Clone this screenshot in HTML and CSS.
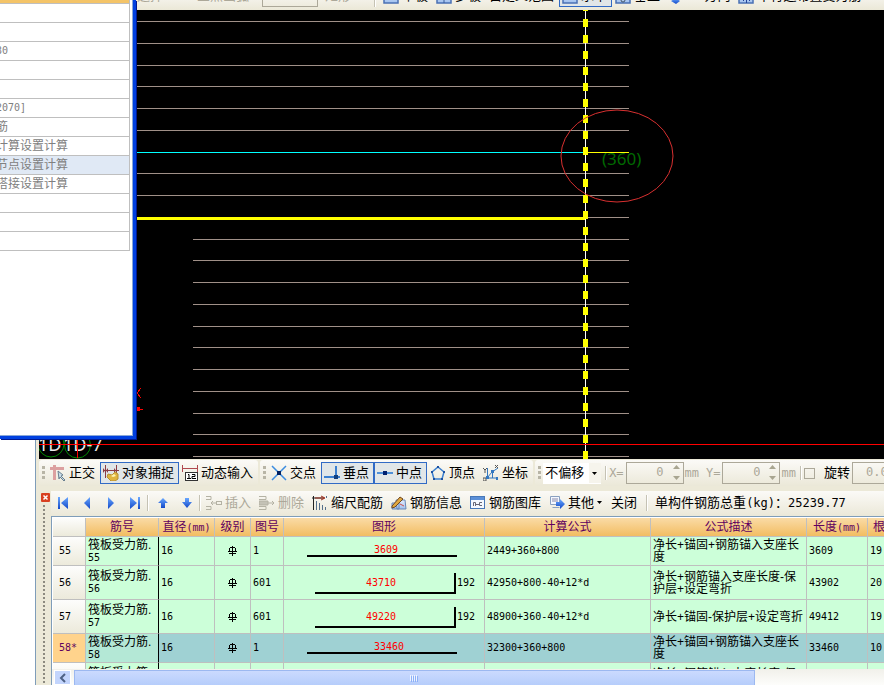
FILE: index.html
```html
<!DOCTYPE html>
<html lang="zh-CN">
<head>
<meta charset="utf-8">
<title>钢筋抽样</title>
<link rel="stylesheet" href="styles.css">
</head>
<body>
<svg width="0" height="0" class="defs" aria-hidden="true">
  <defs>
    <linearGradient id="blue" x1="0" y1="0" x2="0" y2="1"><stop offset="0" stop-color="#6aa8ff"/><stop offset="1" stop-color="#1248c8"/></linearGradient>
    <linearGradient id="pale" x1="0" y1="0" x2="0" y2="1"><stop offset="0" stop-color="#e4eeff"/><stop offset="1" stop-color="#a0c0ee"/></linearGradient>
    <symbol id="grade" viewBox="0 0 9 10"><path d="M2 1h5v1H2zM1 2h1v3H1zM7 2h1v3H7zM4 0h1v10H4zM0 5h9v1H0zM1 7h7v1H1z"/></symbol>
    <symbol id="slab" viewBox="0 0 16 16"><rect x="1" y="1" width="14" height="14" fill="url(#pale)" stroke="#4a70b4" stroke-width="1.500"/></symbol>
  </defs>
</svg>
<main class="window">
  <header class="draw-bar">
    <button class="tool off"><span>选择</span></button>
    <button class="tool off arc"><span>三点画弧</span></button>
    <input class="arc-size" type="text" aria-label="半径" disabled>
    <button class="tool off"><span>矩形</span></button>
    <i class="sep"></i>
    <button class="tool"><svg width="16" height="16"><use href="#slab"/></svg><span>单板</span></button>
    <button class="tool"><svg width="16" height="16"><use href="#slab"/><path d="M8 1v14" stroke="#3a5f9c"/></svg><span>多板</span></button>
    <button class="tool"><span>自定义范围</span></button>
    <button class="tool on"><svg width="16" height="16"><use href="#slab"/></svg><span>水平</span></button>
    <button class="tool"><svg width="16" height="16"><use href="#slab"/><circle cx="8" cy="12" r="2" fill="none" stroke="#456"/></svg><span>垂直</span></button>
    <button class="tool"><svg width="16" height="16"><path d="M3 13l5-3 4 3-4 3z" fill="url(#blue)"/></svg><span>XY方向</span></button>
    <button class="tool"><svg width="16" height="16"><use href="#slab"/><path d="M5.500 9v4M8.500 9v6M11.500 9v4" stroke="#249"/></svg><span>平行边布置受力筋</span></button>
  </header>

  <svg class="canvas" role="img" aria-label="绘图区">
    <g transform="translate(-39 -10)" shape-rendering="crispEdges">
      <path d="M137 21.500H629M137 43.500H629M137 65.500H629M137 86.500H629M137 108.500H629M137 130.500H629M137 173.500H629M137 195.500H629M137 217.500H629M193 239.500H629M193 260.500H629M193 282.500H629M193 304.500H629M193 326.500H629M193 347.500H629M193 369.500H629M193 391.500H629M193 413.500H629M193 434.500H629M193 456.500H629" stroke="#a09088"/>
      <path d="M137 152.500H585" stroke="#0ff"/>
      <path d="M588 152.500H629" stroke="#ff0"/>
      <path d="M137 218.500H586" stroke="#ff0" stroke-width="3"/>
      <path d="M585.500 10V459" stroke="#fff"/>
      <path d="M585.500 3V459" stroke="#ff0" stroke-width="5" stroke-dasharray="8 8"/>
      <g fill="none" stroke="#080" shape-rendering="auto"><circle cx="51" cy="444" r="13"/><circle cx="77.500" cy="445" r="13"/></g>
      <g class="axis" shape-rendering="auto"><text x="38" y="451">1D</text><text x="63" y="451">1D-7</text></g>
      <path d="M39 444.500H2000M77.500 440V458" stroke="#f00"/>
      <path d="M141 388l-4 5 4 5M137 409h6" fill="none" stroke="#f00"/><path d="M137 407h3v4h-3z" fill="#f00"/>
      <ellipse cx="617" cy="156" rx="56" ry="46" fill="none" stroke="#d83030" shape-rendering="auto"/>
      <text class="dim" x="602" y="165">(360)</text>
    </g>
  </svg>

  <div class="snap-bar">
    <div class="group">
      <i class="grip"></i>
      <button class="tool"><svg width="16" height="16"><path d="M0 2h14v3H0zM3 0h3v15H3z" fill="#dca0a0"/><path d="M8 6l5 4-2 1 4 4-1 1-4-4-1 2z" fill="#c8dce8" stroke="#6a8090"/></svg><span>正交</span></button>
      <button class="tool on"><svg width="16" height="16"><path d="M2.500 0v13M13.500 0v12M0 5.500h16" stroke="#8c3c44" fill="none"/><path d="M0 3l2 2.500L0 8zM5 3v5L3 5.500zM11 3l2 2.500L11 8z" fill="#8c3c44"/><path d="M5 9l4 1 3-3 3 2v5l-3 2H8l-4-4z" fill="#e0b440" stroke="#b89030"/><path d="M8 11l3-2 2 2-3 1z" fill="#fff4b0"/></svg><span>对象捕捉</span></button>
      <button class="tool"><svg width="16" height="16"><path d="M0 3.500h16M.5 0v7M15.500 0v7" stroke="#b04850"/><rect x="3.500" y="7.500" width="12" height="8" fill="#fff" stroke="#333"/><path d="M6 9.500h1v4M5 13.500h4M10 9.500h3v2h-3v2h4" fill="none" stroke="#000"/></svg><span>动态输入</span></button>
    </div>
    <div class="group">
      <i class="grip"></i>
      <button class="tool"><svg width="16" height="16"><path d="M1 1l14 14M15 1L1 15" stroke="#3c8ce0" stroke-width="1.500"/><rect x="6" y="6" width="4" height="4" fill="#002060"/></svg><span>交点</span></button>
      <button class="tool on"><svg width="16" height="16"><path d="M0 12h16M12 1v11" stroke="#3c80d0" stroke-width="2"/><rect x="10" y="10" width="4" height="4" fill="#124080"/></svg><span>垂点</span></button>
      <button class="tool on"><svg width="16" height="16"><path d="M0 8h16" stroke="#5090d8" stroke-width="2"/><rect x="6" y="6" width="4" height="4" fill="#002070"/></svg><span>中点</span></button>
      <button class="tool"><svg width="16" height="16"><path d="M8 2l6 5-2 7H4L2 7z" fill="none" stroke="#3c80d0" stroke-width="1.500"/><path d="M7 1h2v2H7zM13 6h2v2h-2zM1 6h2v2H1zM3 13h2v2H3zM11 13h2v2h-2z" fill="#1c50a0"/></svg><span>顶点</span></button>
      <button class="tool"><svg width="16" height="16"><path d="M4.500 3v10H15M4 13l5-6 6-4M9.500 7v6" fill="none" stroke="#3478c0"/><path d="M0 3l2 2 2-2M2 5v3M12 0l3 3M15 0l-3 3M0 13h3v3H0z" fill="none" stroke="#555"/><path d="M3 11h3v3H3zM8 5h3v3H8zM13 12h2v3h-2z" fill="#3478c0"/></svg><span>坐标</span></button>
    </div>
    <div class="group grow">
      <i class="grip"></i>
      <div class="drop"><select aria-label="偏移方式"><option>不偏移</option></select><svg width="5" height="3"><path d="M0 0h5L2.500 3z"/></svg></div>
      <i class="sep"></i>
      <label class="off num" for="dx">X=</label>
      <div class="spin"><input id="dx" type="text" value="0" disabled><svg width="7" height="15"><path d="M3.500 0L7 4H0zM0 11h7l-3.500 4z" fill="#a8a590"/></svg></div>
      <span class="off num unit">mm</span>
      <label class="off num" for="dy">Y=</label>
      <div class="spin"><input id="dy" type="text" value="0" disabled><svg width="7" height="15"><path d="M3.500 0L7 4H0zM0 11h7l-3.500 4z" fill="#a8a590"/></svg></div>
      <span class="off num">mm</span>
      <i class="sep"></i>
      <label class="rotate"><input type="checkbox">旋转</label>
      <input class="angle" type="text" value="0.000" aria-label="旋转角度" disabled>
    </div>
  </div>

  <section class="dock">
    <aside class="dock-side"><button class="close" aria-label="关闭面板"><svg width="9" height="9"><rect width="9" height="9" rx="1" fill="#d84020"/><path d="M2.500 2.500l4 4M6.500 2.500l-4 4" stroke="#fff" stroke-width="1.500"/></svg></button></aside>
    <div class="dock-main">
      <div class="edit-bar">
        <button class="nav" aria-label="首行"><svg width="12" height="12"><path d="M1 0h2v12H1zM11 0v12L4 6z" fill="url(#blue)"/></svg></button>
        <button class="nav" aria-label="上一行"><svg width="12" height="12"><path d="M9 0v12L3 6z" fill="url(#blue)"/></svg></button>
        <button class="nav" aria-label="下一行"><svg width="12" height="12"><path d="M3 0v12l6-6z" fill="url(#blue)"/></svg></button>
        <button class="nav" aria-label="末行"><svg width="12" height="12"><path d="M9 0h2v12H9zM1 0v12l7-6z" fill="url(#blue)"/></svg></button>
        <i class="sep"></i>
        <button class="nav" aria-label="上移"><svg width="12" height="12"><path d="M6 1l5 5H8v5H4V6H1z" fill="url(#blue)"/></svg></button>
        <button class="nav" aria-label="下移"><svg width="12" height="12"><path d="M4 1h4v4h3l-5 6-5-6h3z" fill="url(#blue)"/></svg></button>
        <i class="sep"></i>
        <button class="tool off"><svg width="16" height="16" fill="none" stroke="#b4b2a4"><path d="M0 1.500h5v3H0M0 11.500h5v3H0M5 8h5M7 6L5 8l2 2"/><rect x="10.500" y="6.500" width="5" height="3"/></svg><span>插入</span></button>
        <button class="tool off"><svg width="16" height="16" fill="none" stroke="#b4b2a4"><path d="M0 1.500h7v3H0M0 11.500h7v3H0M9 8h6M13 6l2 2-2 2"/><path d="M0 6h9v4H0z" fill="#c4c2b6"/></svg><span>删除</span></button>
        <button class="tool"><svg width="16" height="16"><path d="M1.500 1v14M0 3h12" stroke="#222"/><path d="M3 3h9M9 1l4 2-4 2" stroke="#a03020" fill="none"/><path d="M14.500 1v2M4.500 6v9M7.500 8v7M10.500 10v5M13.500 12v3" stroke="#56708c"/></svg><span>缩尺配筋</span></button>
        <button class="tool"><svg width="16" height="16"><path d="M5 5h9l1 9H6zM1 8h7v6H1z" fill="url(#pale)" stroke="#6888b8"/><path d="M1 11L9 2l3 2-8 8-3 1z" fill="#e0a840" stroke="#704820"/><path d="M9 9l4 2" stroke="#c85050"/></svg><span>钢筋信息</span></button>
        <button class="tool"><svg width="16" height="16"><rect x=".5" y="1.500" width="14" height="12" fill="#f4f8ff" stroke="#4878b8"/><path d="M1 2h13v3H1z" fill="#5c90d8"/><path d="M3.500 11V7.500h2V11M5.500 9.500h4M12 7.500H9.500v3H12" fill="none" stroke="#667"/></svg><span>钢筋图库</span></button>
        <button class="tool"><svg width="16" height="16"><path d="M1.500 1.500h9v8h-9zM3.500 12.500h7" fill="#f4f8ff" stroke="#8aa0c0"/><path d="M3 4h6M3 6h6" stroke="#88a"/><path d="M7 7h4V4l5 5-5 5v-3H7z" fill="url(#blue)"/></svg><span>其他</span><svg class="caret" width="5" height="3"><path d="M0 0h5L2.500 3z"/></svg></button>
        <button class="tool plain"><span>关闭</span></button>
        <i class="sep"></i>
        <output class="total">单构件钢筋总重<span class="num">(kg)</span>：<span class="num">25239.77</span></output>
      </div>

      <div class="grid-wrap">
        <table class="grid">
          <colgroup><col class="c-row"><col class="c-name"><col class="c-dia"><col class="c-grade"><col class="c-no"><col class="c-shape"><col class="c-calc"><col class="c-desc"><col class="c-len"><col class="c-count"></colgroup>
          <thead><tr><th class="corner"></th><th>筋号</th><th>直径<span class="num">(mm)</span></th><th>级别</th><th>图号</th><th>图形</th><th>计算公式</th><th>公式描述</th><th>长度<span class="num">(mm)</span></th><th class="cut">根数</th></tr></thead>
          <tbody>
            <tr class="low"><th class="num">55</th><td class="name">筏板受力筋.<br><span class="num">55</span></td><td class="num">16</td><td class="mid"><svg width="9" height="10"><use href="#grade"/></svg></td><td class="num">1</td><td class="shape"><svg width="200" height="28"><path d="M23 19h150"/><text x="90" y="16">3609</text></svg></td><td class="num">2449+360+800</td><td>净长+锚固+钢筋锚入支座长<br>度</td><td class="num">3609</td><td class="num">19</td></tr>
            <tr class="high"><th class="num">56</th><td class="name">筏板受力筋.<br><span class="num">56</span></td><td class="num">16</td><td class="mid"><svg width="9" height="10"><use href="#grade"/></svg></td><td class="num">601</td><td class="shape"><svg width="200" height="33"><path d="M31 27h140V7"/><text x="82" y="20">43710</text><text class="hook" x="173" y="20">192</text></svg></td><td class="num">42950+800-40+12*d</td><td>净长+钢筋锚入支座长度-保<br>护层+设定弯折</td><td class="num">43902</td><td class="num">20</td></tr>
            <tr class="high"><th class="num">57</th><td class="name">筏板受力筋.<br><span class="num">57</span></td><td class="num">16</td><td class="mid"><svg width="9" height="10"><use href="#grade"/></svg></td><td class="num">601</td><td class="shape"><svg width="200" height="33"><path d="M31 27h140V7"/><text x="82" y="20">49220</text><text class="hook" x="173" y="20">192</text></svg></td><td class="num">48900+360-40+12*d</td><td>净长+锚固-保护层+设定弯折</td><td class="num">49412</td><td class="num">19</td></tr>
            <tr class="low current"><th class="num">58*</th><td class="name">筏板受力筋.<br><span class="num">58</span></td><td class="num">16</td><td class="mid"><svg width="9" height="10"><use href="#grade"/></svg></td><td class="num">1</td><td class="shape"><svg width="200" height="28"><path d="M23 19h150"/><text x="90" y="16">33460</text></svg></td><td class="num">32300+360+800</td><td>净长+锚固+钢筋锚入支座长<br>度</td><td class="num">33460</td><td class="num">10</td></tr>
            <tr class="high"><th></th><td class="name">筏板受力筋.<br><span class="num">59</span></td><td></td><td></td><td></td><td></td><td></td><td>净长+钢筋锚入支座长度-保<br>护层+设定弯折</td><td></td><td></td></tr>
          </tbody>
        </table>
      </div>
      <div class="scroll">
        <button class="scroll-left" aria-label="向左滚动"><svg width="8" height="10"><path d="M6 1L2 5l4 4" fill="none" stroke="#4d6185" stroke-width="2"/></svg></button>
        <div class="thumb"><svg width="8" height="7"><path d="M.5 0v6M2.500 0v6M4.500 0v6M6.500 0v6" stroke="#eef4fe"/><path d="M1.500 1v6M3.500 1v6M5.500 1v6M7.500 1v6" stroke="#8cb0f8"/></svg></div>
      </div>
    </div>
  </section>
</main>

<div class="dialog" role="dialog" aria-label="属性编辑器">
  <table class="props">
    <thead><tr><th></th></tr></thead>
    <tbody>
      <tr><td></td></tr><tr><td></td></tr><tr><td class="num">30</td></tr><tr><td></td></tr><tr><td></td></tr>
      <tr><td class="num">2070]</td></tr><tr><td>筋</td></tr><tr><td>计算设置计算</td></tr><tr class="picked"><td>节点设置计算</td></tr><tr><td>搭接设置计算</td></tr>
      <tr><td></td></tr><tr><td></td></tr><tr><td></td></tr>
    </tbody>
  </table>
</div>
</body>
</html>
```
FILE: styles.css
```css
* { box-sizing: border-box; }

body {
  margin: 0;
  background: #fff;
  color: #000;
  font: 13px/16px "Liberation Sans", "Noto Sans CJK SC", sans-serif;
}

.defs { position: absolute; }

button, input, select { font: inherit; color: inherit; }

.num { font-family: "DejaVu Sans Mono", "Noto Sans CJK SC", monospace; }

.window {
  display: flex;
  flex-direction: column;
  height: 100vh;
  margin-left: 35px;
  border-left: 1px solid #7f9db9;
  background: #ece9d8;
  overflow: hidden;
}

/* toolbars */
.tool, .nav {
  display: flex;
  flex: none;
  align-items: center;
  border: 1px solid transparent;
  background: none;
  white-space: nowrap;
}
.tool { gap: 3px; height: 22px; padding: 0 4px 0 2px; }
.tool.on { border-color: #316ac5; background: #e1e6e8; }
.tool.off, .off { color: #aca899; }
.nav { justify-content: center; width: 24px; height: 22px; padding: 0; }

.sep {
  flex: none;
  width: 2px;
  height: 16px;
  border-left: 1px solid #c5c2b4;
  border-right: 1px solid #fff;
}

.grip {
  flex: none;
  width: 3px;
  height: 15px;
  margin-right: 2px;
  background: repeating-linear-gradient(#b8b5a6 0 3px, transparent 3px 5px);
}

.draw-bar {
  display: flex;
  flex: none;
  align-items: flex-end;
  height: 10px;
  padding: 0 0 3px 98px;
  background: linear-gradient(#f3f1e8, #ebe8d7);
  overflow: hidden;
}
.arc { margin-left: 26px; }
.arc-size { width: 56px; height: 22px; margin: 0 4px 0 8px; border: 1px solid #aca899; background: transparent; }
.draw-bar .sep { margin: 0 4px 0 18px; }

.canvas {
  display: block;
  flex: none;
  align-self: stretch;
  height: 449px;
  margin-left: 3px;
  background: #000;
}
.dim { font: 17px "Noto Sans", sans-serif; fill: #006800; }
.axis { font: 18px "Noto Sans", sans-serif; fill: #e8e8e8; }

.snap-bar { display: flex; flex: none; gap: 2px; padding: 1px 0 5px 3px; }
.group {
  display: flex;
  flex: none;
  align-items: center;
  height: 26px;
  padding-left: 3px;
  border-radius: 3px;
  background: linear-gradient(#fbfaf7, #ebe8d8);
}
.group.grow { flex: 1 0 auto; }
.group .sep { margin: 0 2px 0 4px; height: 14px; }
.group > .num { font-size: 12px; }

.drop { position: relative; width: 58px; height: 21px; background: #fff; }
.drop select {
  width: 100%;
  height: 20px;
  padding: 0 0 0 2px;
  border: 0;
  background: linear-gradient(90deg, transparent 46px, #f6f4ec 46px);
  appearance: none;
}
.drop svg { position: absolute; top: 9px; right: 4px; }

.spin { position: relative; width: 58px; height: 22px; margin: 0 1px 0 2px; }
.spin input {
  width: 100%;
  height: 100%;
  padding: 0 19px 2px 0;
  border: 1px solid #aca899;
  background: transparent;
  color: #aca899;
  font: 12px "DejaVu Sans Mono", monospace;
  text-align: right;
}
.spin svg { position: absolute; top: 3px; right: 4px; }
.unit { margin-right: 7px; }

.rotate { display: flex; align-items: center; gap: 9px; }
.rotate input {
  width: 11px;
  height: 11px;
  margin: 0;
  border: 1px solid #aca899;
  appearance: none;
}
.angle {
  width: 58px;
  height: 22px;
  margin-left: 2px;
  padding: 0 0 2px 13px;
  border: 1px solid #aca899;
  background: transparent;
  color: #aca899;
  font: 12px "DejaVu Sans Mono", monospace;
}

/* docked editor */
.dock { display: flex; flex: 1; min-height: 0; }
.dock-side {
  flex: none;
  width: 15px;
  padding: 0 5px;
  background: radial-gradient(circle, #8c8a80 1px, transparent 1px) 6px 13px / 4px 4px repeat-y;
}
.close { display: block; width: 10px; height: 12px; padding: 0; border: 0; background: #ece9d8; }
.close svg { display: block; }
.dock-main { display: flex; flex: 1; flex-direction: column; min-width: 0; }

.edit-bar {
  display: flex;
  flex: none;
  align-items: center;
  height: 25px;
  padding-bottom: 2px;
  background: linear-gradient(#fbfaf7, #ebe8d8);
  white-space: nowrap;
  overflow: hidden;
}
.edit-bar .sep { margin-right: 2px; }
.edit-bar .plain { padding: 0 8px 0 3px; }
.total { padding-left: 5px; }
.total .num { font-size: 12px; }

.grid-wrap {
  flex: 1;
  min-height: 0;
  padding: 1px 0 0 1px;
  border-top: 1px solid #7f9db9;
  border-left: 1px solid #7f9db9;
  background: #fff;
  overflow: hidden;
}
.grid {
  width: 855px;
  border-collapse: separate;
  border-spacing: 0;
  table-layout: fixed;
  font-size: 12px;
  line-height: 12px;
}
.grid .num { font-size: 10px; }
.c-row { width: 33px; }
.c-name { width: 73px; }
.c-dia { width: 56px; }
.c-grade { width: 36px; }
.c-no { width: 33px; }
.c-shape { width: 201px; }
.c-calc { width: 166px; }
.c-desc { width: 156px; }
.c-len { width: 61px; }
.c-count { width: 40px; }

.grid th, .grid td {
  padding: 0 0 0 2px;
  border-right: 1px solid #bfbfbf;
  border-bottom: 1px solid #bfbfbf;
  white-space: nowrap;
  overflow: hidden;
}
.grid td { background: #ccffd9; }
.grid thead th {
  height: 19px;
  padding: 0;
  background: linear-gradient(#fadba6, #f2bd62);
  color: #600060;
  font-weight: normal;
}
.grid thead .corner, .grid tbody th { background: linear-gradient(#fdfdfc, #eceadb); }
.grid thead .cut { padding-left: 5px; text-align: left; }
.grid tbody th { padding: 0 0 0 6px; font-weight: normal; text-align: left; }
.low > * { height: 29px; }
.high > * { height: 34px; }
.grid .name { border-right-color: #000; }
.grid .mid { padding: 0; text-align: center; }
.mid svg { display: block; margin: 0 auto; shape-rendering: crispEdges; }
.grid .shape { padding: 0; }
.shape svg { display: block; }
.shape path { fill: none; stroke: #000; stroke-width: 2; }
.shape text { font: 10px "DejaVu Sans Mono", monospace; fill: #f00; }
.shape .hook { fill: #000; }
.current td { background: #9fd1d3; }
.current .name { background: #b4e8d6; }
.grid .current th { background: #ffd38c; color: #600060; }

.scroll {
  display: flex;
  flex: none;
  gap: 3px;
  height: 16px;
  padding: 1px 0 0 2px;
  border-left: 1px solid #7f9db9;
  background: linear-gradient(#f1f0ea, #fdfdfb);
}
.scroll-left {
  display: flex;
  align-items: center;
  justify-content: center;
  width: 17px;
  padding: 0;
  border: 1px solid #fff;
  background: #c3d5fd;
}
.thumb {
  display: flex;
  align-items: center;
  justify-content: center;
  width: 82%;
  border: 1px solid #9cb8f0;
  border-bottom: 0;
  background: linear-gradient(#cbdafe, #b6cdfb);
}

/* floating property dialog */
.dialog {
  position: absolute;
  top: 0;
  left: 0;
  width: 136px;
  height: 439px;
  border: solid #0040e0;
  border-width: 0 3px 3px 0;
  background: #fff;
  box-shadow: 1px 1px #001890, inset -1px -1px #8aa8d8;
}
.props {
  width: 134px;
  margin-left: -4px;
  border-collapse: separate;
  border-spacing: 0;
  color: #808080;
  font-size: 12px;
  line-height: 16px;
}
.props th { height: 4px; padding: 0; border-bottom: 1px solid #bfbfbf; border-right: 1px solid #bfbfbf; background: #f4c468; }
.props td { height: 19px; padding: 0; border-bottom: 1px solid #bfbfbf; border-right: 1px solid #bfbfbf; }
.props .num { font-size: 10px; }
.picked td { background: #e0e9f5; }
```
